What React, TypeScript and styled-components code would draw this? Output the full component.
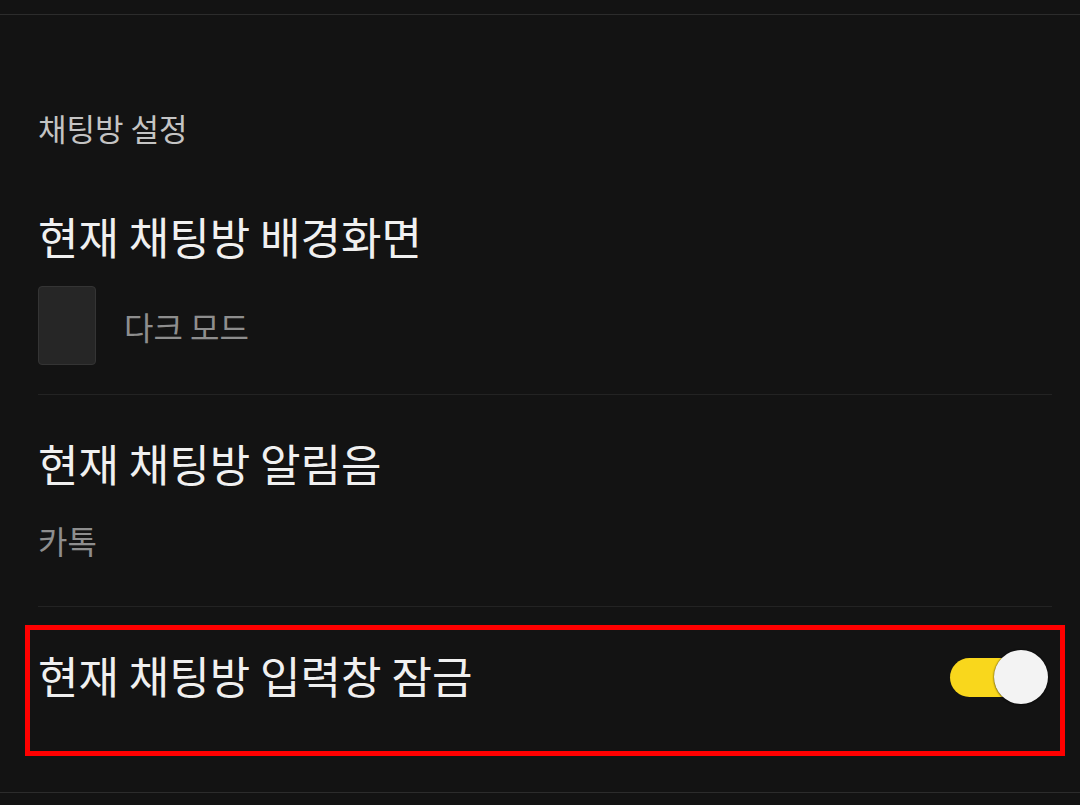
import React from "react";
import styled, { createGlobalStyle } from "styled-components";

const GlobalStyle = createGlobalStyle`
  html, body {
    margin: 0;
    padding: 0;
    background: #131313;
  }
  body {
    font-family: "Noto Sans CJK KR", "Noto Sans", sans-serif;
    color: #f0f0f0;
  }
`;

const Page = styled.div`
  min-height: 805px;
  background: #131313;
`;

const TopBar = styled.div`
  height: 14px;
  border-bottom: 1px solid #2c2c2c;
`;

const Section = styled.section`
  padding: 0 28px 49px 38px;
  border-bottom: 1px solid #2c2c2c;
`;

const SectionHeader = styled.h2`
  margin: 93px 0 20px;
  font-size: 31px;
  line-height: 40px;
  font-weight: 400;
  color: #c4c4c4;
`;

const Item = styled.div<{ $bottom: number }>`
  padding: 40px 0 ${(p) => p.$bottom}px;
  border-bottom: 1px solid #232323;
`;

const Title = styled.div`
  font-size: 44px;
  line-height: 56px;
  font-weight: 400;
  color: #f0f0f0;
  white-space: nowrap;
`;

const ValueRow = styled.div`
  display: flex;
  align-items: center;
  gap: 28px;
  margin-top: 22px;
`;

const Swatch = styled.div`
  width: 58px;
  height: 79px;
  box-sizing: border-box;
  border-radius: 4px;
  background: #262626;
  border: 1px solid #343434;
`;

const Value = styled.div<{ $top?: number }>`
  font-size: 32px;
  line-height: 40px;
  color: #8e8e8e;
  margin-top: ${(p) => p.$top ?? 0}px;
`;

const ToggleRow = styled.div`
  display: flex;
  justify-content: space-between;
  align-items: flex-start;
  margin-top: 31px;
  padding: 9px 4px 38px 0;
  outline: 5px solid #ff0000;
  outline-offset: 8px;
`;

const SwitchWrap = styled.div`
  position: relative;
  width: 98px;
  height: 56px;
  display: flex;
  align-items: center;
  margin-top: 2px;
`;

const Track = styled.div<{ $on: boolean }>`
  width: 95px;
  height: 39px;
  border-radius: 20px;
  background: ${(p) => (p.$on ? "#f9d71c" : "#555")};
`;

const Thumb = styled.div`
  position: absolute;
  right: 0;
  top: 1px;
  width: 54px;
  height: 54px;
  border-radius: 50%;
  background: #f3f3f3;
  box-shadow: 0 0 2px rgba(0, 0, 0, 0.6), 0 1px 2px rgba(0, 0, 0, 0.4);
`;

const Switch = ({ on }: { on: boolean }) => (
  <SwitchWrap>
    <Track $on={on} />
    <Thumb />
  </SwitchWrap>
);

export default function App() {
  return (
    <Page>
      <GlobalStyle />
      <TopBar />
      <Section>
        <SectionHeader>채팅방 설정</SectionHeader>
        <Item $bottom={29}>
          <Title>현재 채팅방 배경화면</Title>
          <ValueRow>
            <Swatch />
            <Value>다크 모드</Value>
          </ValueRow>
        </Item>
        <Item $bottom={46}>
          <Title>현재 채팅방 알림음</Title>
          <Value $top={29}>카톡</Value>
        </Item>
        <ToggleRow>
          <Title>현재 채팅방 입력창 잠금</Title>
          <Switch on />
        </ToggleRow>
      </Section>
    </Page>
  );
}
